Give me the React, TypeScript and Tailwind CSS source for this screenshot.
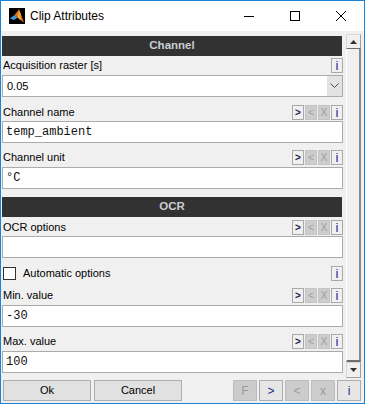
const sans = "font-['Liberation_Sans',Arial,sans-serif]"
const mono = "font-['Liberation_Mono','Courier_New',monospace]"

function MiniBtn({ glyph, enabled }: { glyph: string; enabled: boolean }) {
  if (glyph === 'i') {
    return (
      <div className="flex h-[15px] w-[12px] items-center justify-center border border-[#a9a9a9] bg-[#f0f0f0] text-[13px] leading-none text-[#1c2a8c]">
        i
      </div>
    )
  }
  return (
    <div
      className={
        enabled
          ? 'flex h-[15px] w-[12px] items-center justify-center border border-[#a9a9a9] bg-[#f0f0f0] text-[10px] font-bold leading-none text-[#1c2450]'
          : 'flex h-[15px] w-[12px] items-center justify-center border border-[#c4c4c4] bg-[#cdcdcd] text-[10px] leading-none text-[#9c9c9c]'
      }
    >
      {glyph}
    </div>
  )
}

function LabelRow({ label, full, className }: { label: string; full: boolean; className: string }) {
  return (
    <div className={`flex h-[15px] items-center justify-between ${className}`}>
      <span className="pl-[1px] text-[11px] leading-none text-black">{label}</span>
      <div className="flex gap-[1px]">
        {full && <MiniBtn glyph=">" enabled />}
        {full && <MiniBtn glyph="<" enabled={false} />}
        {full && <MiniBtn glyph="X" enabled={false} />}
        <MiniBtn glyph="i" enabled />
      </div>
    </div>
  )
}

function Edit({ value, className }: { value: string; className: string }) {
  return (
    <div className={`flex h-[22px] items-center border border-[#ababab] bg-white pl-[3px] ${mono} text-[12px] text-[#111111] ${className}`}>
      {value}
    </div>
  )
}

function Header({ title, className }: { title: string; className: string }) {
  return (
    <div className={`flex h-[20px] w-[340px] items-center justify-center bg-[#323232] text-[11.5px] font-bold text-[#c9ced4] ${className}`}>
      {title}
    </div>
  )
}

function BottomBtn({ label, enabled }: { label: string; enabled: boolean }) {
  return (
    <div
      className={
        enabled
          ? 'flex h-[21px] w-[24px] items-center justify-center border border-[#adadad] bg-[#e6e6e6] text-[12px] text-[#1c2a8c]'
          : 'flex h-[21px] w-[24px] items-center justify-center border border-[#bdbdbd] bg-[#cccccc] text-[12px] text-[#9a9a9a]'
      }
    >
      {label}
    </div>
  )
}

export default function App() {
  return (
    <div className={`flex h-[404px] w-[365px] flex-col border border-[#1883d7] bg-[#f0f0f0] ${sans}`}>
      {/* Title bar */}
      <div className="flex h-[30px] items-center bg-white">
        <svg className="ml-[8px]" width="16" height="16" viewBox="0 0 16 16">
          <rect width="16" height="16" fill="#000" />
          <path d="M1 10.5 L5.5 7 L8.5 9.5 L5 12 Z" fill="#3d9ad6" />
          <path d="M5.5 7 L10 1.5 L15 14.5 L11.5 12 L8.5 9.5 Z" fill="#e0731f" />
          <path d="M10 1.5 L12 7 L11.5 12 L8.5 9.5 Z" fill="#f2a73a" />
        </svg>
        <span className="ml-[5px] text-[12px] text-black">Clip Attributes</span>
        <div className="ml-auto flex h-full">
          <div className="flex w-[46px] items-center justify-center">
            <svg width="10" height="10" viewBox="0 0 10 10">
              <line x1="0" y1="5.5" x2="10" y2="5.5" stroke="#000" strokeWidth="1" />
            </svg>
          </div>
          <div className="flex w-[46px] items-center justify-center">
            <svg width="10" height="10" viewBox="0 0 10 10">
              <rect x="0.5" y="0.5" width="9" height="9" fill="none" stroke="#000" strokeWidth="1" />
            </svg>
          </div>
          <div className="flex w-[46px] items-center justify-center">
            <svg width="10" height="10" viewBox="0 0 10 10">
              <path d="M0 0 L10 10 M10 0 L0 10" stroke="#000" strokeWidth="1" />
            </svg>
          </div>
        </div>
      </div>

      {/* Body */}
      <div className="flex">
        <div className="flex w-[342px] flex-col pl-[1px]">
          <Header title="Channel" className="mt-[5px]" />
          <LabelRow label="Acquisition raster [s]" full={false} className="mt-[2px]" />
          <div className="mt-[2px] flex h-[22px] items-center border border-[#ababab] bg-white">
            <span className="flex-1 pl-[4px] text-[11px] text-black">0.05</span>
            <div className="flex h-full w-[15px] items-center justify-center bg-[#e3e3e3]">
              <svg width="9" height="6" viewBox="0 0 9 6">
                <polyline points="0.5,0.5 4.5,4.5 8.5,0.5" fill="none" stroke="#4a4a4a" strokeWidth="1" />
              </svg>
            </div>
          </div>
          <LabelRow label="Channel name" full className="mt-[8px]" />
          <Edit value="temp_ambient" className="mt-[1px]" />
          <LabelRow label="Channel unit" full className="mt-[7px]" />
          <Edit value="°C" className="mt-[2px]" />
          <Header title="OCR" className="mt-[8px]" />
          <LabelRow label="OCR options" full className="mt-[3px]" />
          <Edit value="" className="mt-[1px]" />
          <div className="mt-[8px] flex h-[15px] items-center justify-between">
            <div className="flex items-center">
              <div className="ml-[1px] h-[13px] w-[13px] border border-[#333333] bg-white" />
              <span className="ml-[7px] text-[11px] leading-none text-black">Automatic options</span>
            </div>
            <MiniBtn glyph="i" enabled />
          </div>
          <LabelRow label="Min. value" full className="mt-[7px]" />
          <Edit value="-30" className="mt-[2px]" />
          <LabelRow label="Max. value" full className="mt-[7px]" />
          <Edit value="100" className="mt-[2px]" />
        </div>

        {/* Scrollbar */}
        <div className="ml-[3px] mt-[3px] flex h-[344px] w-[15px] flex-col">
          <div className="flex h-[15px] items-center justify-center border border-[#d8d8d8] border-b-[#6e6e6e] border-r-[#a0a0a0] bg-[#f0f0f0]">
            <svg width="7" height="4" viewBox="0 0 7 4">
              <path d="M0 4 L3.5 0 L7 4 Z" fill="#333" />
            </svg>
          </div>
          <div className="flex-1 border-b-2 border-l border-r-2 border-b-[#6e6e6e] border-l-white border-r-[#8a8a8a] bg-[#f0f0f0]" />
          <div className="flex h-[16px] items-center justify-center border border-[#d8d8d8] border-b-[#a0a0a0] border-r-[#a0a0a0] bg-[#f0f0f0]">
            <svg width="7" height="4" viewBox="0 0 7 4">
              <path d="M0 0 L3.5 4 L7 0 Z" fill="#333" />
            </svg>
          </div>
        </div>
      </div>

      {/* Bottom buttons */}
      <div className="mt-[2px] flex items-center pl-[2px] pr-[3px]">
        <div className="flex h-[21px] w-[88px] items-center justify-center border border-[#adadad] bg-[#e1e1e1] text-[11px] text-black">
          Ok
        </div>
        <div className="ml-[3px] flex h-[21px] w-[88px] items-center justify-center border border-[#adadad] bg-[#e1e1e1] text-[11px] text-black">
          Cancel
        </div>
        <div className="ml-auto flex gap-[2px]">
          <BottomBtn label="F" enabled={false} />
          <BottomBtn label=">" enabled />
          <BottomBtn label="<" enabled={false} />
          <BottomBtn label="x" enabled={false} />
          <BottomBtn label="i" enabled />
        </div>
      </div>
    </div>
  )
}
